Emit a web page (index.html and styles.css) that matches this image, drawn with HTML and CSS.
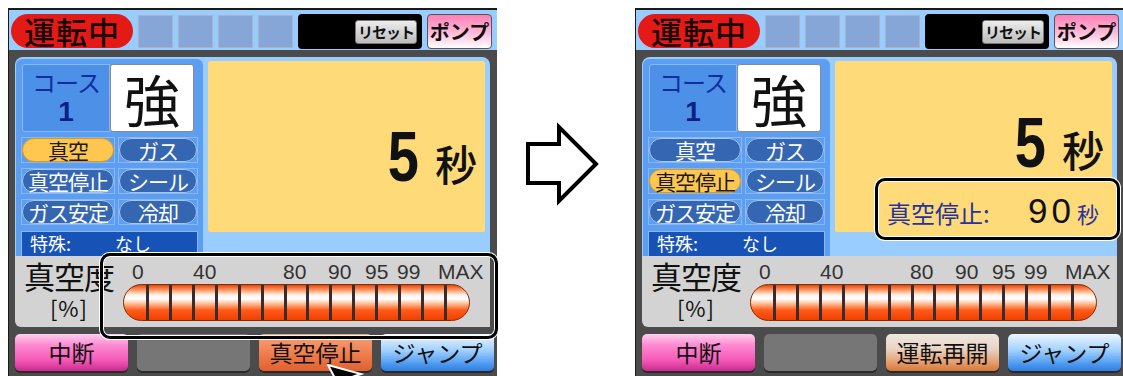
FILE: index.html
```html
<!DOCTYPE html>
<html lang="ja">
<head>
    <meta charset="UTF-8">
    <meta name="viewport" content="width=device-width, initial-scale=1.0">
    <title>真空停止</title>
    <link rel="stylesheet" href="styles.css">
</head>
<body>
<div class="stage">

    <!-- 運転中 画面 -->
    <div class="device">
        <div class="topbar">
            <div class="status">運転中</div>
            <div class="slot"></div>
            <div class="slot"></div>
            <div class="slot"></div>
            <div class="slot"></div>
            <div class="msg"><span class="reset">リセット</span></div>
            <div class="pump">ポンプ</div>
        </div>
        <div class="frame">
            <div class="main">
                <div class="side">
                    <div class="course-row">
                        <div class="course"><span class="course-label">コース</span><span class="course-no">1</span></div>
                        <div class="power">強</div>
                    </div>
                    <div class="steps">
                        <div class="cell"><span class="step on">真空</span></div>
                        <div class="cell"><span class="step">ガス</span></div>
                        <div class="cell"><span class="step">真空停止</span></div>
                        <div class="cell"><span class="step">シール</span></div>
                        <div class="cell"><span class="step">ガス安定</span></div>
                        <div class="cell"><span class="step">冷却</span></div>
                    </div>
                    <div class="special"><span class="special-key">特殊:</span><span>なし</span></div>
                </div>
                <div class="timer">
                    <div class="count"><span class="num">5</span><span class="unit">秒</span></div>
                </div>
            </div>
            <div class="vacuum">
                <div class="vac-label"><span class="vac-title">真空度</span><span class="vac-unit">[%]</span></div>
                <div class="gauge">
                    <div class="scale">
                        <span style="left:9px">0</span>
                        <span style="left:70px">40</span>
                        <span style="left:160px">80</span>
                        <span style="left:205px">90</span>
                        <span style="left:242px">95</span>
                        <span style="left:274px">99</span>
                        <span style="left:315px">MAX</span>
                    </div>
                    <div class="bar"><i></i><i></i><i></i><i></i><i></i><i></i><i></i><i></i><i></i><i></i><i></i><i></i><i></i><i></i><i></i></div>
                </div>
            </div>
            <div class="buttons">
                <div class="btn pink">中断</div>
                <div class="btn blank"></div>
                <div class="btn orange">真空停止</div>
                <div class="btn blue">ジャンプ</div>
            </div>
        </div>
        <div class="callout gauge-callout"></div>
        <svg class="cursor" width="40" height="20" viewBox="0 0 40 20">
            <polygon points="3,3 36,12 24,16 16,20 12,20" fill="#000" stroke="#fff" stroke-width="2"/>
        </svg>
    </div>

    <div class="arrow-col">
        <svg width="138" height="368" viewBox="0 0 138 368">
            <polygon points="31,136 62,136 62,119 99,156 62,193 62,175 31,175" fill="#fff" stroke="#000" stroke-width="4"/>
        </svg>
    </div>

    <!-- 真空停止 画面 -->
    <div class="device">
        <div class="topbar">
            <div class="status">運転中</div>
            <div class="slot"></div>
            <div class="slot"></div>
            <div class="slot"></div>
            <div class="slot"></div>
            <div class="msg"><span class="reset">リセット</span></div>
            <div class="pump">ポンプ</div>
        </div>
        <div class="frame">
            <div class="main">
                <div class="side">
                    <div class="course-row">
                        <div class="course"><span class="course-label">コース</span><span class="course-no">1</span></div>
                        <div class="power">強</div>
                    </div>
                    <div class="steps">
                        <div class="cell"><span class="step">真空</span></div>
                        <div class="cell"><span class="step">ガス</span></div>
                        <div class="cell"><span class="step on">真空停止</span></div>
                        <div class="cell"><span class="step">シール</span></div>
                        <div class="cell"><span class="step">ガス安定</span></div>
                        <div class="cell"><span class="step">冷却</span></div>
                    </div>
                    <div class="special"><span class="special-key">特殊:</span><span>なし</span></div>
                </div>
                <div class="timer timer-top">
                    <div class="count"><span class="num">5</span><span class="unit">秒</span></div>
                </div>
            </div>
            <div class="vacuum">
                <div class="vac-label"><span class="vac-title">真空度</span><span class="vac-unit">[%]</span></div>
                <div class="gauge">
                    <div class="scale">
                        <span style="left:9px">0</span>
                        <span style="left:70px">40</span>
                        <span style="left:160px">80</span>
                        <span style="left:205px">90</span>
                        <span style="left:242px">95</span>
                        <span style="left:274px">99</span>
                        <span style="left:315px">MAX</span>
                    </div>
                    <div class="bar"><i></i><i></i><i></i><i></i><i></i><i></i><i></i><i></i><i></i><i></i><i></i><i></i><i></i><i></i><i></i></div>
                </div>
            </div>
            <div class="buttons">
                <div class="btn pink">中断</div>
                <div class="btn blank"></div>
                <div class="btn resume">運転再開</div>
                <div class="btn blue">ジャンプ</div>
            </div>
        </div>
        <div class="callout stop-callout">
            <span class="stop-label">真空停止:</span>
            <span class="stop-num">90</span>
            <span class="stop-unit">秒</span>
        </div>
    </div>

</div>
</body>
</html>
```

FILE: styles.css
```css
body {
    margin: 0;
    background: #fff;
    font-family: "Noto Sans CJK JP", sans-serif;
    color: #111;
    overflow: hidden;
}
.stage {
    display: flex;
    align-items: flex-start;
    width: 1123px;
    height: 376px;
    padding: 8px 0 0 8px;
    box-sizing: border-box;
    overflow: hidden;
}
.device {
    position: relative;
    flex: none;
    width: 489px;
    height: 368px;
    box-sizing: border-box;
    border-top: 2px solid #1a1a1a;
    border-left: 1px solid #1a1a1a;
    background: #4b4b4b;
    display: flex;
    flex-direction: column;
}
.arrow-col {
    flex: none;
    width: 138px;
}

/* top bar */
.topbar {
    flex: none;
    height: 40px;
    background: #99ccff;
    display: flex;
    align-items: flex-start;
    gap: 5px;
    padding: 4px 0 0 2px;
    box-sizing: border-box;
}
.status {
    width: 122px;
    height: 34px;
    border-radius: 17px;
    background: #e41a17;
    color: #1a0505;
    font-size: 31px;
    font-weight: 500;
    line-height: 34px;
    text-align: center;
    letter-spacing: 1px;
}
.slot {
    width: 35px;
    height: 33px;
    margin-top: 1px;
    background: #86a6d8;
    border: 1px solid #a8b4c4;
    box-sizing: border-box;
}
.msg {
    width: 124px;
    height: 35px;
    background: #000;
    border-radius: 4px;
    display: flex;
    align-items: center;
    justify-content: flex-end;
    padding-right: 5px;
    box-sizing: border-box;
}
.reset {
    width: 62px;
    height: 24px;
    box-sizing: border-box;
    background: linear-gradient(#ececec, #bcbcbc);
    border: 1px solid #777;
    border-radius: 3px;
    font-size: 15px;
    font-weight: bold;
    line-height: 22px;
    text-align: center;
    letter-spacing: -1px;
}
.pump {
    width: 65px;
    height: 35px;
    box-sizing: border-box;
    border: 1px solid #555;
    border-radius: 4px;
    background: linear-gradient(#ff7fb6, #ffbcd9 55%, #fff);
    font-size: 20px;
    font-weight: bold;
    line-height: 33px;
    text-align: center;
}

/* main area */
.frame {
    flex: 1;
    padding: 7px 7px 0 6px;
    display: flex;
    flex-direction: column;
}
.main {
    flex: none;
    height: 199px;
    background: #99ccff;
    border-radius: 8px 8px 0 0;
    display: flex;
    gap: 5px;
    padding: 2px 5px 0 1px;
    box-sizing: border-box;
}
.side {
    width: 187px;
    height: 197px;
    box-sizing: border-box;
    background: #5c9ff2;
    border-radius: 6px 6px 0 0;
    padding: 5px;
}
.course-row {
    display: flex;
    height: 68px;
    margin-left: 1px;
}
.course {
    width: 88px;
    box-sizing: border-box;
    background: #4d90e8;
    border: 1px solid #84b8fa;
    border-radius: 3px 0 0 3px;
    display: flex;
    flex-direction: column;
    align-items: center;
    color: #112e9e;
}
.course-label {
    font-size: 24px;
    line-height: 28px;
    margin-top: 3px;
    letter-spacing: -1px;
}
.course-no {
    font: bold 28px/32px "Liberation Sans", sans-serif;
    color: #0c2088;
}
.power {
    width: 84px;
    box-sizing: border-box;
    background: #fff;
    border: 1px solid #8a8a8a;
    border-radius: 3px;
    font-size: 56px;
    line-height: 66px;
    text-align: center;
}
.steps {
    display: grid;
    grid-template-columns: 94px 80px;
    grid-auto-rows: 26px;
    gap: 5px 3px;
    margin-top: 5px;
}
.cell {
    display: flex;
    border: 1px solid #8bb6ee;
    box-sizing: border-box;
}
.step {
    flex: 1;
    border-radius: 12px;
    background: #3466b2;
    border: 1px solid #a6c6f2;
    color: #fff;
    font-size: 21px;
    line-height: 22px;
    text-align: center;
    letter-spacing: -1px;
}
.step.on {
    background: #ffc74f;
    border-color: #d99a1c;
    color: #1a1a1a;
}
.special {
    display: flex;
    height: 26px;
    margin-top: 6px;
    padding-left: 8px;
    box-sizing: border-box;
    background: #1753b6;
    border: 1px solid #8bb6ee;
    color: #fff;
    font-size: 18px;
    line-height: 23px;
    overflow: hidden;
}
.special-key {
    width: 85px;
}
.timer {
    position: relative;
    width: 277px;
    height: 171px;
    margin-top: 2px;
    box-sizing: border-box;
    padding: 61px 8px 0 0;
    background: #ffda78;
    border-radius: 2px;
    display: flex;
    justify-content: flex-end;
    align-items: flex-start;
}
.timer-top {
    padding-top: 47px;
}
.count {
    display: flex;
    align-items: baseline;
}
.num {
    display: inline-block;
    font: bold 70px/1 "Liberation Sans", sans-serif;
    transform: scaleX(.8);
    transform-origin: right;
}
.unit {
    font-size: 42px;
    font-weight: 500;
    line-height: 1;
    margin-left: 16px;
}

/* vacuum gauge */
.vacuum {
    flex: none;
    height: 71px;
    display: flex;
    padding-left: 5px;
    box-sizing: border-box;
    background: #d3d3d3;
    border-radius: 0 0 0 6px;
}
.vac-label {
    width: 98px;
    display: flex;
    flex-direction: column;
    align-items: center;
}
.vac-title {
    font-size: 31px;
    line-height: 32px;
    margin-top: 4px;
    letter-spacing: -1px;
}
.vac-unit {
    font-size: 22px;
    line-height: 30px;
    letter-spacing: 1px;
}
.gauge {
    position: relative;
    width: 347px;
    margin-left: 5px;
    padding-top: 28px;
}
.scale span {
    position: absolute;
    top: 5px;
    font: 21px/22px "Liberation Sans", sans-serif;
    color: #333;
}
.bar {
    display: flex;
    height: 37px;
    box-sizing: border-box;
    border: 1px solid #8a2a00;
    border-radius: 19px;
    overflow: hidden;
    background: linear-gradient(#d94a14 0%, #ff8a50 12%, #fff0e6 28%, #fff 40%, #ffb080 56%, #ff5a1a 72%, #f04000 100%);
}
.bar i {
    flex: 1;
    border-right: 3px solid #3a2c2c;
}
.bar i:first-child {
    flex: 1.12;
}
.bar i:last-child {
    flex: 1.12;
    border-right: 0;
}

/* bottom buttons */
.buttons {
    display: grid;
    grid-template-columns: repeat(4, 113px);
    gap: 9px;
    width: 479px;
    height: 37px;
    margin-top: 7px;
}
.btn {
    border-radius: 5px;
    font-size: 23px;
    line-height: 37px;
    text-align: center;
    box-shadow: 0 2px 0 #2a2a2a;
}
.pink {
    background: linear-gradient(#ffd0ee, #ff8ad2 30%, #f45ab8 70%, #cc2a8e);
}
.blank {
    background: #767676;
}
.orange {
    background: linear-gradient(#f9a27a, #f08050 50%, #e0602e);
}
.resume {
    background: linear-gradient(#efe7df, #e8d4c4 40%, #e6a070 75%, #d87838);
}
.blue {
    background: linear-gradient(#eef7ff, #9fcfff 45%, #4f9bf0 80%, #2f7de0);
}

/* annotations */
.callout {
    position: absolute;
    box-sizing: border-box;
    border: 3px solid #000;
    border-radius: 10px;
    box-shadow: 0 0 0 1px #fff, inset 0 0 0 1px #fff;
}
.gauge-callout {
    left: 91px;
    top: 243px;
    width: 398px;
    height: 86px;
}
.stop-callout {
    left: 239px;
    top: 168px;
    width: 245px;
    height: 62px;
    background: #ffda78;
    display: flex;
    align-items: baseline;
    padding: 12px 0 0 9px;
}
.stop-label {
    font-size: 24px;
    color: #26339e;
    width: 141px;
}
.stop-num {
    font: 35px/1 "Liberation Sans", sans-serif;
    letter-spacing: 4px;
}
.stop-unit {
    font-size: 22px;
    color: #26339e;
    margin-left: 2px;
}
.cursor {
    position: absolute;
    left: 316px;
    top: 352px;
}
```
